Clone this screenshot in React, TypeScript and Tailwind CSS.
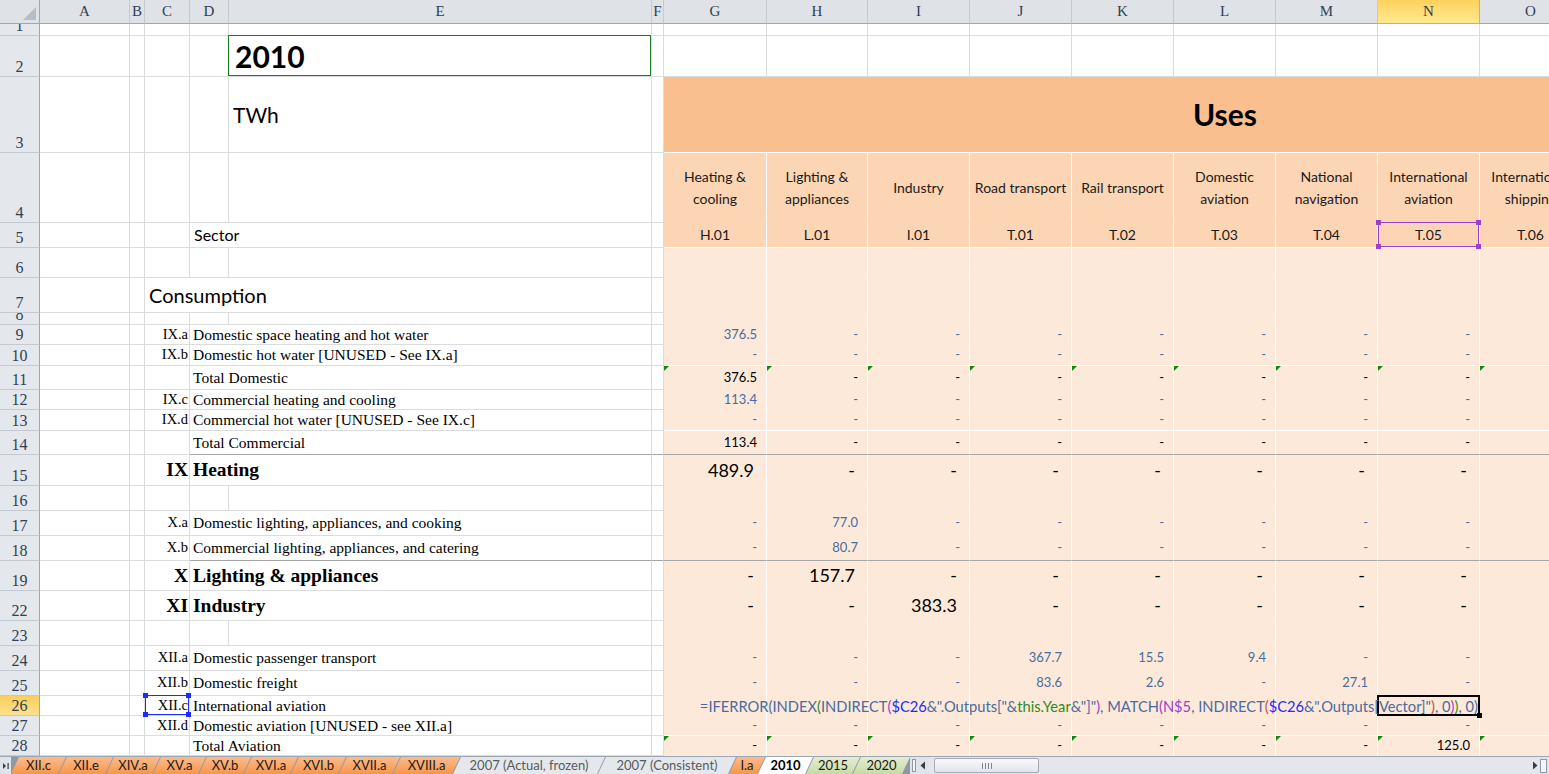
import type { ReactNode } from "react";

const SERIF = "font-['Liberation_Serif',serif]";
const SANS = "font-['Lato',sans-serif]";

const LEFT_COLS = [
  { k: "A", w: "w-[90px]" },
  { k: "B", w: "w-[15px]" },
  { k: "C", w: "w-[45px]" },
  { k: "D", w: "w-[39px]" },
  { k: "E", w: "w-[423px]" },
  { k: "F", w: "w-[12px]" },
];

const RIGHT_COLS = [
  { k: "G", w: "w-[103px]" },
  { k: "H", w: "w-[101px]" },
  { k: "I", w: "w-[102px]" },
  { k: "J", w: "w-[102px]" },
  { k: "K", w: "w-[102px]" },
  { k: "L", w: "w-[102px]" },
  { k: "M", w: "w-[102px]" },
  { k: "N", w: "w-[102px]" },
  { k: "O", w: "w-[102px]" },
  { k: "P", w: "w-[102px]" },
  { k: "Q", w: "w-[102px]" },
];

const USES = [
  "Heating &\ncooling",
  "Lighting &\nappliances",
  "Industry",
  "Road transport",
  "Rail transport",
  "Domestic\naviation",
  "National\nnavigation",
  "International\naviation",
  "International\nshipping",
];
const CODES = ["H.01", "L.01", "I.01", "T.01", "T.02", "T.03", "T.04", "T.05", "T.06"];

type Tone = "in" | "tot" | "big";
type RowSpec = {
  n: string;
  h: string;
  kind: "white" | "band" | "head4" | "head5" | "data";
  c?: ReactNode;
  d?: ReactNode;
  e?: ReactNode;
  cOver?: boolean;
  box?: boolean;
  vals?: string[];
  tone?: Tone;
  line?: "white" | "gray";
  tri?: boolean;
  hl?: boolean;
};

const code = (s: string) => <span className={`${SERIF} text-[14.5px] text-black`}>{s}</span>;
const lbl = (s: string) => <span className={`${SERIF} text-[15.5px] text-black`}>{s}</span>;
const bold = (s: string) => <span className={`${SERIF} text-[19.5px] font-bold text-black`}>{s}</span>;
const dashes = (n: number) => Array.from({ length: n }, () => "-");

const ROWS: RowSpec[] = [
  { n: "1", h: "h-[12px]", kind: "white" },
  {
    n: "2",
    h: "h-[41px]",
    kind: "white",
    box: true,
    e: <span className={`${SANS} pl-[2px] text-[30px] font-bold text-black`}>2010</span>,
  },
  { n: "3", h: "h-[76px]", kind: "band", e: <span className={`${SANS} text-[21px] text-black`}>TWh</span> },
  { n: "4", h: "h-[70px]", kind: "head4" },
  { n: "5", h: "h-[25px]", kind: "head5", d: <span className={`${SANS} pl-px text-[16px] text-black`}>Sector</span> },
  { n: "6", h: "h-[30px]", kind: "data" },
  { n: "7", h: "h-[35px]", kind: "data", cOver: true, c: <span className={`${SANS} text-[20px] text-black`}>Consumption</span> },
  { n: "8", h: "h-[12px]", kind: "data" },
  { n: "9", h: "h-[20px]", kind: "data", c: code("IX.a"), d: lbl("Domestic space heating and hot water"), vals: ["376.5", ...dashes(8)], tone: "in" },
  { n: "10", h: "h-[21px]", kind: "data", c: code("IX.b"), d: lbl("Domestic hot water [UNUSED - See IX.a]"), vals: dashes(9), tone: "in", line: "white" },
  { n: "11", h: "h-[24px]", kind: "data", d: lbl("Total Domestic"), vals: ["376.5", ...dashes(8)], tone: "tot", tri: true },
  { n: "12", h: "h-[20px]", kind: "data", c: code("IX.c"), d: lbl("Commercial heating and cooling"), vals: ["113.4", ...dashes(8)], tone: "in" },
  { n: "13", h: "h-[21px]", kind: "data", c: code("IX.d"), d: lbl("Commercial hot water [UNUSED - See IX.c]"), vals: dashes(9), tone: "in", line: "white" },
  { n: "14", h: "h-[24px]", kind: "data", d: lbl("Total Commercial"), vals: ["113.4", ...dashes(8)], tone: "tot", line: "gray" },
  { n: "15", h: "h-[31px]", kind: "data", c: bold("IX"), d: bold("Heating"), vals: ["489.9", ...dashes(8)], tone: "big" },
  { n: "16", h: "h-[25px]", kind: "data" },
  { n: "17", h: "h-[25px]", kind: "data", c: code("X.a"), d: lbl("Domestic lighting, appliances, and cooking"), vals: ["-", "77.0", ...dashes(7)], tone: "in" },
  { n: "18", h: "h-[25px]", kind: "data", c: code("X.b"), d: lbl("Commercial lighting, appliances, and catering"), vals: ["-", "80.7", ...dashes(7)], tone: "in", line: "gray" },
  { n: "19", h: "h-[30px]", kind: "data", c: bold("X"), d: bold("Lighting & appliances"), vals: ["-", "157.7", ...dashes(7)], tone: "big" },
  { n: "22", h: "h-[30px]", kind: "data", c: bold("XI"), d: bold("Industry"), vals: ["-", "-", "383.3", ...dashes(6)], tone: "big" },
  { n: "23", h: "h-[25px]", kind: "data" },
  { n: "24", h: "h-[25px]", kind: "data", c: code("XII.a"), d: lbl("Domestic passenger transport"), vals: ["-", "-", "-", "367.7", "15.5", "9.4", "-", "-", "-"], tone: "in" },
  { n: "25", h: "h-[25px]", kind: "data", c: code("XII.b"), d: lbl("Domestic freight"), vals: ["-", "-", "-", "83.6", "2.6", "-", "27.1", "-", "-"], tone: "in" },
  { n: "26", h: "h-[20px]", kind: "data", c: code("XII.c"), d: lbl("International aviation"), hl: true },
  { n: "27", h: "h-[20px]", kind: "data", c: code("XII.d"), d: lbl("Domestic aviation [UNUSED - see XII.a]"), vals: dashes(9), tone: "in", line: "white" },
  { n: "28", h: "h-[20px]", kind: "data", d: lbl("Total Aviation"), vals: [...dashes(7), "125.0", "-"], tone: "tot", tri: true },
];

const TONE: Record<Tone, string> = {
  in: "pr-[9px] text-[13px] text-[#4a6b9f]",
  tot: "pr-[9px] text-[13px] text-black",
  big: "pr-[12px] text-[18px] text-black",
};

// formula shown while editing N26
const F_DEF = "text-[#4a6b9f]";
const F_GREEN = "text-[#2e8b1e]";
const F_PURPLE = "text-[#a23cc8]";
const F_BLUE = "text-[#1a2cff]";
const F_RED = "text-[#c0552a]";
const FORMULA: [string, string][] = [
  ["=IFERROR(INDEX", F_DEF],
  ["(", F_GREEN],
  ["INDIRECT", F_DEF],
  ["(", F_PURPLE],
  ["$C26", F_BLUE],
  ['&".Outputs["&', F_DEF],
  ["this.Year", F_GREEN],
  ['&"]"', F_DEF],
  [")", F_PURPLE],
  [", MATCH", F_DEF],
  ["(N$5", F_PURPLE],
  [", INDIRECT", F_DEF],
  ["(", F_RED],
  ["$C26", F_BLUE],
  ['&".Outputs[Vector]"', F_DEF],
  [")", F_RED],
  [", 0", F_DEF],
  [")", F_PURPLE],
  [")", F_GREEN],
  [", 0)", F_DEF],
];

function RefBox({ purple }: { purple?: boolean }) {
  const b = purple ? "border-[#9b3fd0]" : "border-[#1a2cff]";
  const f = purple ? "bg-[#9b3fd0]" : "bg-[#1a2cff]";
  return (
    <div className={`absolute left-0 -top-px right-0 bottom-0 z-10 border ${b}`}>
      <span className={`absolute -left-[3px] -top-[3px] h-[5px] w-[5px] ${f}`} />
      <span className={`absolute -right-[3px] -top-[3px] h-[5px] w-[5px] ${f}`} />
      <span className={`absolute -left-[3px] -bottom-[3px] h-[5px] w-[5px] ${f}`} />
      <span className={`absolute -right-[3px] -bottom-[3px] h-[5px] w-[5px] ${f}`} />
    </div>
  );
}

function ColumnHeader() {
  return (
    <div className={`flex h-[24px] w-[1786px] shrink-0 ${SERIF} text-[15px] text-[#2f3f55]`}>
      <div className="relative w-[40px] shrink-0 border-r border-b border-r-[#9ea6b1] border-b-[#9ea6b1] bg-[#dfe3e8]">
        <div className="absolute right-[3px] bottom-[3px] h-0 w-0 border-b-[13px] border-l-[13px] border-b-[#b7bdc6] border-l-transparent" />
      </div>
      {[...LEFT_COLS, ...RIGHT_COLS].map((c) => (
        <div
          key={c.k}
          className={`${c.w} shrink-0 flex items-center justify-center border-r border-b ${
            c.k === "N"
              ? "bg-linear-to-b from-[#fbd25c] to-[#ffe98f] border-r-[#e0ad45] border-b-[#e0ad45]"
              : "bg-[#dfe3e8] border-r-[#c3c9d1] border-b-[#9ea6b1]"
          }`}
        >
          {c.k}
        </div>
      ))}
    </div>
  );
}

function RightPart({ r }: { r: RowSpec }) {
  if (r.kind === "band") {
    return (
      <div className={`w-[1122px] shrink-0 flex items-center justify-center border-b border-b-white bg-[#fabf8f] ${SANS} text-[30px] font-bold text-black`}>
        Uses
      </div>
    );
  }
  if (r.kind === "white") {
    return (
      <div className="flex">
        {RIGHT_COLS.map((c) => (
          <div key={c.k} className={`${c.w} shrink-0 border-r border-b border-r-[#dadcdd] border-b-[#dadcdd]`} />
        ))}
      </div>
    );
  }
  if (r.kind === "head4" || r.kind === "head5") {
    const texts = r.kind === "head4" ? USES : CODES;
    return (
      <div className="flex">
        {RIGHT_COLS.map((c, i) => (
          <div
            key={c.k}
            className={`relative ${c.w} shrink-0 flex items-center justify-center border-r border-b border-r-white bg-[#fcd5b4] ${
              r.kind === "head4" ? "border-b-transparent" : "border-b-white"
            } ${SANS} text-[14px] leading-[22px] text-[#1a1a1a] text-center whitespace-pre-line`}
          >
            {texts[i] ?? ""}
            {r.kind === "head5" && c.k === "N" && <RefBox purple />}
          </div>
        ))}
      </div>
    );
  }
  const bottom =
    r.line === "white" ? "border-b-white" : r.line === "gray" ? "border-b-[#a6a6a6]" : "border-b-transparent";
  return (
    <div className="flex">
      {RIGHT_COLS.map((c, i) => {
        const v = r.vals?.[i];
        return (
          <div
            key={c.k}
            className={`relative ${c.w} shrink-0 flex items-center justify-end border-r border-b border-r-white ${bottom} bg-[#fde9d9] ${SANS}`}
          >
            {r.tri && i < 9 && (
              <span className="absolute left-0 top-0 h-0 w-0 border-t-[5px] border-r-[5px] border-t-[#0b8a0b] border-r-transparent" />
            )}
            {v && r.tone && <span className={TONE[r.tone]}>{v}</span>}
            {r.hl && c.k === "N" && (
              <div className="absolute -left-px -top-px -right-px -bottom-px z-10 border-2 border-black">
                <span className="absolute -right-[4px] -bottom-[4px] h-[5px] w-[5px] bg-black" />
              </div>
            )}
          </div>
        );
      })}
    </div>
  );
}

function SheetRow({ r }: { r: RowSpec }) {
  const g = "border-r-[#dadcdd]";
  const gb = "border-b-[#dadcdd]";
  const deb = r.line === "gray" ? "border-b-[#a6a6a6]" : gb;
  return (
    <div className={`relative flex w-[1786px] shrink-0 ${r.h}`}>
      <div
        className={`w-[40px] shrink-0 flex items-end justify-center overflow-hidden border-r border-b border-r-[#9ea6b1] border-b-[#c3c9d1] ${SERIF} text-[16px] leading-[18px] text-[#2f3f55] ${
          r.hl ? "bg-linear-to-b from-[#f8cf5e] to-[#fbe08c]" : "bg-[#e4e8ed]"
        }`}
      >
        {r.n}
      </div>
      <div className={`w-[90px] shrink-0 border-r border-b ${g} ${gb}`} />
      <div className={`w-[15px] shrink-0 border-r border-b ${g} ${gb}`} />
      <div
        className={`relative w-[45px] shrink-0 flex items-center whitespace-nowrap border-b ${gb} ${
          r.cOver ? "pl-[4px]" : `justify-end pr-px border-r ${g}`
        }`}
      >
        {r.c}
        {r.hl && <RefBox />}
      </div>
      <div
        className={`w-[39px] shrink-0 flex items-center whitespace-nowrap pl-[3px] border-b ${deb} ${
          r.d || r.cOver ? "" : `border-r ${g}`
        }`}
      >
        {r.d}
      </div>
      <div className={`relative w-[423px] shrink-0 flex items-center pl-[4px] border-r border-b ${g} ${deb}`}>
        {r.e}
        {r.box && <div className="absolute -left-px -top-px right-0 bottom-0 border border-[#1e7b1e]" />}
      </div>
      <div className={`w-[12px] shrink-0 border-r border-b ${g} ${deb}`} />
      <RightPart r={r} />
      {r.hl && (
        <div className={`absolute right-[308px] top-0 bottom-0 z-20 flex items-center whitespace-nowrap ${SANS} text-[14.7px]`}>
          {FORMULA.map(([t, cls], i) => (
            <span key={i} className={cls}>
              {t}
            </span>
          ))}
        </div>
      )}
    </div>
  );
}

// widths = distance between slants + 7px for the slant overlap
const TABS = [
  { t: "XII.c", w: "w-[55px]", k: "o" },
  { t: "XII.e", w: "w-[54px]", k: "o" },
  { t: "XIV.a", w: "w-[54px]", k: "o" },
  { t: "XV.a", w: "w-[53px]", k: "o" },
  { t: "XV.b", w: "w-[52px]", k: "o" },
  { t: "XVI.a", w: "w-[54px]", k: "o" },
  { t: "XVI.b", w: "w-[55px]", k: "o" },
  { t: "XVII.a", w: "w-[61px]", k: "o" },
  { t: "XVIII.a", w: "w-[67px]", k: "o" },
  { t: "2007 (Actual, frozen)", w: "w-[152px]", k: "g" },
  { t: "2007 (Consistent)", w: "w-[138px]", k: "g" },
  { t: "I.a", w: "w-[36px]", k: "o" },
  { t: "2010", w: "w-[55px]", k: "a" },
  { t: "2015", w: "w-[54px]", k: "n" },
  { t: "2020", w: "w-[57px]", k: "n" },
];

const TAB_STYLE: Record<string, string> = {
  o: "bg-linear-to-b from-[#fbbb8c] to-[#f79646] text-[#1a1a1a]",
  g: "bg-[#e4e8ed] text-[#5a5a5a]",
  a: "bg-white text-black font-bold",
  n: "bg-linear-to-b from-[#e4edd2] to-[#c8daa2] text-[#1a1a1a]",
};

function TabBar() {
  return (
    <div className={`flex h-[18px] w-[1549px] shrink-0 border-t border-t-[#9ea6b1] bg-[#dfe4ea] ${SANS} text-[13px]`}>
      <div className="w-[11px] shrink-0 flex items-center justify-center">
        <svg width="8" height="8" viewBox="0 0 8 8">
          <path d="M1 1 L4 4 L1 7 Z" fill="#3b3b3b" />
          <rect x="5.5" y="1" width="1.2" height="6" fill="#3b3b3b" />
        </svg>
      </div>
      <div className="flex shrink-0 bg-[#8f99a6]">
        {TABS.map((tab) => (
          <div
            key={tab.t}
            className={`${tab.w} shrink-0 -mr-[7px] last:mr-0 flex items-center justify-center whitespace-nowrap leading-none [clip-path:polygon(8px_0,100%_0,calc(100%_-_8px)_100%,0_100%)] ${TAB_STYLE[tab.k]}`}
          >
            {tab.t}
          </div>
        ))}
      </div>
      <div className="w-[7px] shrink-0 flex items-center justify-center">
        <div className="h-[13px] w-[4px] border border-[#8f99a6] bg-[#f3f5f7]" />
      </div>
      <div className="w-[12px] shrink-0 flex items-center justify-center">
        <svg width="6" height="9" viewBox="0 0 6 9">
          <path d="M5 0.5 L0.5 4.5 L5 8.5 Z" fill="#3b3b3b" />
        </svg>
      </div>
      <div className="flex flex-1 items-center bg-[#e3e7ec]">
        <div className="ml-[5px] flex h-[15px] w-[105px] items-center justify-center gap-[2px] rounded-[2px] border border-[#a3acb7] bg-linear-to-b from-[#f8f9fb] to-[#e1e5ea]">
          <span className="h-[6px] w-px bg-[#7d8591]" />
          <span className="h-[6px] w-px bg-[#7d8591]" />
          <span className="h-[6px] w-px bg-[#7d8591]" />
          <span className="h-[6px] w-px bg-[#7d8591]" />
        </div>
      </div>
      <div className="w-[11px] shrink-0 flex items-center justify-center bg-[#e3e7ec]">
        <svg width="6" height="9" viewBox="0 0 6 9">
          <path d="M1 0.5 L5.5 4.5 L1 8.5 Z" fill="#3b3b3b" />
        </svg>
      </div>
      <div className="w-[9px] shrink-0 flex items-center">
        <div className="h-[14px] w-[7px] border border-[#8f99a6] bg-[#f3f5f7]" />
      </div>
    </div>
  );
}

export default function App() {
  return (
    <div className={`flex h-[774px] w-[1549px] flex-col overflow-hidden bg-white ${SANS}`}>
      <ColumnHeader />
      {ROWS.map((r) => (
        <SheetRow key={r.n} r={r} />
      ))}
      <TabBar />
    </div>
  );
}
